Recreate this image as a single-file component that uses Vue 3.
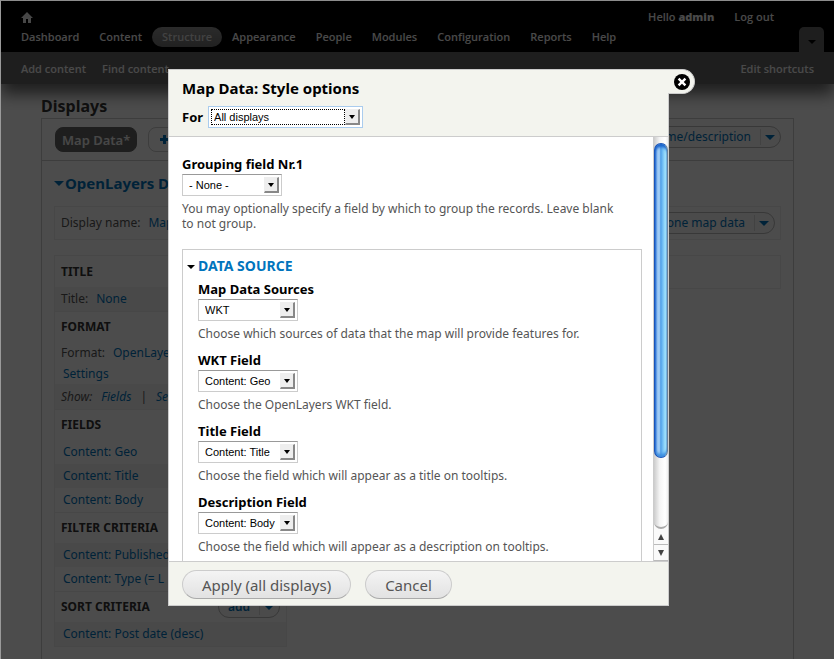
<script setup>
import { ref } from 'vue'

const menu = ['Dashboard', 'Content', 'Structure', 'Appearance', 'People', 'Modules', 'Configuration', 'Reports', 'Help']
const activeMenu = 'Structure'

const display = ref('All displays')
const grouping = ref('- None -')

const fields = ref([
  { id: 'source', label: 'Map Data Sources', value: 'WKT', help: 'Choose which sources of data that the map will provide features for.' },
  { id: 'wkt', label: 'WKT Field', value: 'Content: Geo', help: 'Choose the OpenLayers WKT field.' },
  { id: 'title', label: 'Title Field', value: 'Content: Title', help: 'Choose the field which will appear as a title on tooltips.' },
  { id: 'description', label: 'Description Field', value: 'Content: Body', help: 'Choose the field which will appear as a description on tooltips.' },
])

const lists = [
  { title: 'Fields', rows: ['Content: Geo', 'Content: Title', 'Content: Body'], shade: 1 },
  { title: 'Filter criteria', rows: ['Content: Published', 'Content: Type (= L'], shade: 0 },
  { title: 'Sort criteria', rows: ['Content: Post date (desc)'], shade: 0, add: true },
]
</script>

<template>
  <div class="window">
    <header class="toolbar">
      <div class="toolbar-top">
        <a href="#" class="home" aria-label="Home">
          <svg viewBox="0 0 12 11" width="12" height="11"><path d="M6 0 12 6H10V11H7V7H5V11H2V6H0Z" fill="#eee" /></svg>
        </a>
        <nav class="account">
          <a href="#">Hello <b>admin</b></a>
          <a href="#">Log out</a>
        </nav>
      </div>
      <nav class="menu">
        <a v-for="m in menu" :key="m" href="#" :class="{ active: m === activeMenu }">{{ m }}</a>
        <button class="toggle" aria-label="Toggle shortcuts"><i class="tri"></i></button>
      </nav>
    </header>
    <nav class="shortcuts">
      <a href="#">Add content</a>
      <a href="#">Find content</a>
      <a href="#" class="edit">Edit shortcuts</a>
    </nav>

    <main class="page">
      <h1>Displays</h1>
      <section class="panel">
        <div class="tabs">
          <button class="tab current">Map Data*</button>
          <button class="tab" aria-label="Add display"><span class="plus"></span></button>
          <div class="split push">
            <button class="split-main">edit name/description</button>
            <button class="split-arrow" aria-label="More actions"><i class="tri"></i></button>
          </div>
        </div>
        <div class="display">
          <h2><i class="tri"></i>OpenLayers Data</h2>
          <div class="bar">
            <span>Display name:</span><a href="#">Map</a>
            <div class="split push">
              <button class="split-main">clone map data</button>
              <button class="split-arrow" aria-label="More actions"><i class="tri"></i></button>
            </div>
          </div>
          <div class="columns">
            <div class="bucket">
              <h3>Title</h3>
              <p class="row shaded">Title:<a href="#">None</a></p>
              <h3>Format</h3>
              <p class="row format">Format:<a href="#">OpenLayers</a></p>
              <p class="row format settings"><a href="#">Settings</a></p>
              <p class="row shaded show">Show:<a href="#">Fields</a><span class="sep">|</span><a href="#">Settings</a></p>
              <template v-for="l in lists" :key="l.title">
                <h3>{{ l.title }}
                  <span v-if="l.add" class="split push">
                    <button class="split-main">add</button>
                    <button class="split-arrow" aria-label="More sort actions"><i class="tri"></i></button>
                  </span>
                </h3>
                <p v-for="(r, i) in l.rows" :key="r" class="row item" :class="{ shaded: i % 2 === l.shade }"><a href="#">{{ r }}</a></p>
              </template>
            </div>
            <div class="aside"></div>
          </div>
        </div>
      </section>
    </main>

    <div class="backdrop"></div>

    <div class="stage">
      <form class="dialog" role="dialog" aria-labelledby="dialog-title" @submit.prevent>
        <header class="dialog-head">
          <h2 id="dialog-title">Map Data: Style options</h2>
          <div class="for">
            <label for="display">For</label>
            <span class="select wide focused">
              <select id="display" v-model="display"><option>All displays</option></select>
              <i class="drop"></i>
            </span>
          </div>
          <button type="button" class="close" aria-label="Close">
            <svg viewBox="0 0 16 16" width="16" height="16"><circle cx="8" cy="8" r="8" fill="#000" /><path d="M4.6 4.6 11.4 11.4M11.4 4.6 4.6 11.4" stroke="#fff" stroke-width="2.4" /></svg>
          </button>
        </header>
        <div class="dialog-body">
          <div class="scroll">
            <div class="field">
              <label for="grouping">Grouping field Nr.1</label>
              <span class="select">
                <select id="grouping" v-model="grouping"><option>- None -</option></select>
                <i class="drop"></i>
              </span>
              <p class="help tight">You may optionally specify a field by which to group the records. Leave blank to not group.</p>
            </div>
            <fieldset>
              <h3><a href="#"><i class="tri"></i>Data source</a></h3>
              <div v-for="f in fields" :key="f.id" class="field">
                <label :for="f.id">{{ f.label }}</label>
                <span class="select">
                  <select :id="f.id" v-model="f.value"><option>{{ f.value }}</option></select>
                  <i class="drop"></i>
                </span>
                <p class="help">{{ f.help }}</p>
              </div>
            </fieldset>
          </div>
          <div class="scrollbar" aria-hidden="true">
            <div class="track"><div class="thumb"></div></div>
            <div class="step"><i class="tri up"></i></div>
            <div class="step"><i class="tri"></i></div>
          </div>
        </div>
        <footer class="dialog-foot">
          <button type="submit">Apply (all displays)</button>
          <button type="button">Cancel</button>
        </footer>
      </form>
    </div>
  </div>
</template>

<style>
body { margin: 0; background: #4c4c4c; }
</style>

<style scoped>
.window, .window * { box-sizing: border-box; }
.window {
  position: relative;
  display: flex;
  flex-direction: column;
  height: 100vh;
  overflow: hidden;
  border-top: 1px solid #8c8c8c;
  border-left: 1px solid #9a9a9a;
  background: #fff;
  font: 12px/16px "Noto Sans", "Open Sans", sans-serif;
  color: #555;
}
h1, h2, h3, p { margin: 0; }
a { color: #0074bd; text-decoration: none; }
button { font: inherit; color: inherit; padding: 0; border: 0; background: none; }
.push { margin-left: auto; }
.tri {
  display: inline-block;
  width: 0;
  border: 5px solid transparent;
  border-top-color: currentColor;
  border-bottom: 0;
}

.toolbar { position: relative; z-index: 1; flex: none; height: 51px; padding: 6px 10px 0 20px; background: #000; }
.toolbar a, .shortcuts a { color: #f4f4f4; font: 600 11px/20px "Open Sans", sans-serif; }
.toolbar-top { display: flex; justify-content: space-between; height: 20px; }
.home { display: flex; align-items: center; }
.account { display: flex; gap: 20px; padding-right: 50px; }
.menu { display: flex; align-items: flex-start; margin-left: -10px; }
.menu a { padding: 0 10px; border-radius: 10px; }
.menu .active { background: linear-gradient(#909090, #707070); color: #ddd; }
.toggle { width: 25px; height: 25px; margin-left: auto; border-radius: 5px 5px 0 0; background: #666; color: #000; }
.toggle .tri { border-width: 4px; border-bottom: 0; }

.shortcuts {
  position: relative;
  flex: none;
  display: flex;
  gap: 16px;
  height: 32px;
  padding: 7px 20px 0;
  background: #666;
  box-shadow: 0 10px 16px #666;
  white-space: nowrap;
}
.shortcuts .edit { margin-left: auto; }

.page { flex: 1; display: flex; flex-direction: column; padding: 12px 40px 0; }
h1 { position: relative; font-size: 16px; line-height: 20px; color: #333; }
.panel { flex: 1; margin-top: 2px; border: 1px solid #ccc; border-bottom: 0; }
.tabs { display: flex; align-items: flex-start; gap: 11px; height: 42px; padding: 8px 12px 0 13px; border-bottom: 1px solid #ccc; }
.tab { display: flex; align-items: center; height: 25px; padding: 0 8px; border: 1px solid #ccc; border-radius: 8px; color: #0074bd; }
.tab.current { padding: 0 6px; border-color: #666; background: #666; color: #eee; font-weight: 600; font-size: 13px; }
.plus { width: 9px; height: 9px; margin: 0 6px 0 3px; background: linear-gradient(#0074bd, #0074bd) center / 3px 9px no-repeat, linear-gradient(#0074bd, #0074bd) center / 9px 3px no-repeat; }
.split { display: flex; align-items: center; height: 22px; border: 1px solid #bbb; border-radius: 12px; color: #0074bd; background: #fafafa; }
.tabs .split { margin-top: -1px; }
.split-main { padding: 0 9px; font-size: 12px; }
.split-arrow { display: flex; align-items: center; width: 20px; height: 16px; padding-left: 4px; border-left: 1px solid #ddd; }

.display { padding: 12px 12px 0; }
.display h2 { display: flex; align-items: center; gap: 1px; font-size: 15px; line-height: 20px; color: #0074bd; }
.bar { display: flex; align-items: center; gap: 8px; height: 34px; margin-top: 13px; padding: 0 5px 0 6px; border: 1px solid #eee; }
.columns { display: grid; grid-template-columns: 233px 1fr; gap: 15px; align-items: start; margin-top: 15px; }
.bucket, .aside { border: 1px solid #eee; }
.aside { height: 34px; }
.bucket h3 { display: flex; align-items: center; height: 31px; padding: 0 6px; border-top: 1px solid #eee; font-size: 12px; text-transform: uppercase; color: #333; }
.bucket h3:first-child { border-top: 0; }
.bucket .split { text-transform: none; }
.bucket .split-main { font-weight: 600; }
.row { display: flex; align-items: center; gap: 8px; height: 24px; padding: 0 6px; overflow: hidden; white-space: nowrap; }
.row.shaded { background: #f4f4f4; }
.row.format { height: 21px; }
.row.settings, .row.item { padding-left: 8px; }
.row.show { height: 25px; gap: 9px; font-style: italic; }

.backdrop { position: absolute; z-index: 2; inset: 0; background: rgba(0, 0, 0, 0.7); }
.stage { position: absolute; z-index: 3; inset: 0; display: flex; justify-content: center; align-items: flex-start; padding: 68px 0 0 2px; }

.dialog { position: relative; display: flex; flex-direction: column; width: 501px; height: calc(100vh - 122px); border: 1px solid #ccc; background: #fff; color: #000; }
.dialog-head { flex: none; height: 67px; padding: 7px 13px 0; border-bottom: 1px solid #ccc; background: #f3f4ee; }
.dialog-head h2 { font-size: 15px; line-height: 22px; }
.for { display: flex; align-items: center; gap: 5px; margin-top: 7px; }
label { font-size: 13px; line-height: 18px; font-weight: 700; }
.close {
  position: absolute;
  top: -1px;
  right: -27px;
  display: flex;
  align-items: center;
  width: 27px;
  height: 25px;
  padding-left: 6px;
  border: 1px solid #ccc;
  border-left: 0;
  border-radius: 0 13px 13px 0;
  background: #f3f4ee;
}
.dialog-body { flex: 1; min-height: 0; display: flex; }
.scroll { flex: 1; overflow-y: auto; scrollbar-width: none; padding: 18px 11px 0 13px; }
.field { display: flex; flex-direction: column; align-items: flex-start; }
.field label { margin-bottom: 1px; }
.help { margin-top: 4px; font-size: 12px; line-height: 18px; color: #555; }
.help.tight { margin-top: 5px; padding-right: 20px; line-height: 15px; }
.select { position: relative; display: block; width: 100px; height: 22px; }
.select.wide { width: 155px; }
select {
  appearance: none;
  display: block;
  width: 100%;
  height: 100%;
  padding: 0 20px 0 6px;
  border: 1px solid #ccc;
  border-top-color: #999;
  border-radius: 0;
  background: #fff;
  font: 11px/14px "Liberation Sans", Arial, sans-serif;
  color: #000;
}
.focused select { padding-left: 5px; border-color: #aaccee; }
.focused::before { content: ""; position: absolute; inset: 3px 18px 3px 3px; border: 1px dotted #000; pointer-events: none; }
.drop { position: absolute; top: 3px; right: 3px; width: 15px; height: 16px; border: 1px solid #eee; border-right: 2px solid #888; border-bottom: 2px solid #888; background: #eee; pointer-events: none; }
.drop::after { content: ""; position: absolute; top: 5px; left: 3px; border: 3px solid transparent; border-top: 4px solid #000; border-bottom: 0; }

fieldset { margin: 18px 0 0; padding: 6px 15px 20px; border: 1px solid #ccc; }
fieldset h3 { margin: 0 0 1px -11px; font-size: 14px; line-height: 20px; text-transform: uppercase; }
fieldset h3 .tri { border-width: 4px; border-bottom: 0; margin-right: 3px; color: #000; vertical-align: 2px; }
fieldset .field { height: 71px; padding-top: 3px; }

.scrollbar { flex: none; display: flex; flex-direction: column; width: 15px; border-left: 1px solid #ccc; background: #fafafa; }
.track { flex: 1; padding-top: 6px; border-radius: 0 0 8px 8px; border-bottom: 2px solid #aaa; background: linear-gradient(90deg, #ccc, #f4f4f4 40%, #fff 80%, #eee); }
.thumb { height: 82%; border: 1px solid #1a55b8; border-right-color: #68829c; border-radius: 7px; background: linear-gradient(90deg, #1d63cf 0, #8dbdf0 18%, #a9d2f7 35%, #4f9fe8 48%, #69b7f2 60%, #a9eaff 90%, #7fb4d6); box-shadow: inset 0 4px 3px -1px #1762cc, inset 0 -4px 3px -1px #3b8de0; }
.step { display: flex; align-items: center; justify-content: center; height: 16px; border-bottom: 1px solid #bbb; color: #444; }
.step .tri { border-width: 3px; border-top-width: 6px; border-bottom: 0; }
.step .up { transform: rotate(180deg); }

.dialog-foot { flex: none; display: flex; gap: 14px; height: 44px; padding: 8px 13px 0; border-top: 1px solid #ccc; background: #f3f4ee; }
.dialog-foot button { height: 29px; padding: 0 19px; border: 1px solid #ccc; border-bottom-color: #aaa; border-radius: 15px; background: linear-gradient(#f4f4f4, #e2e2e2); font-size: 15px; line-height: 24px; color: #555; }
</style>
